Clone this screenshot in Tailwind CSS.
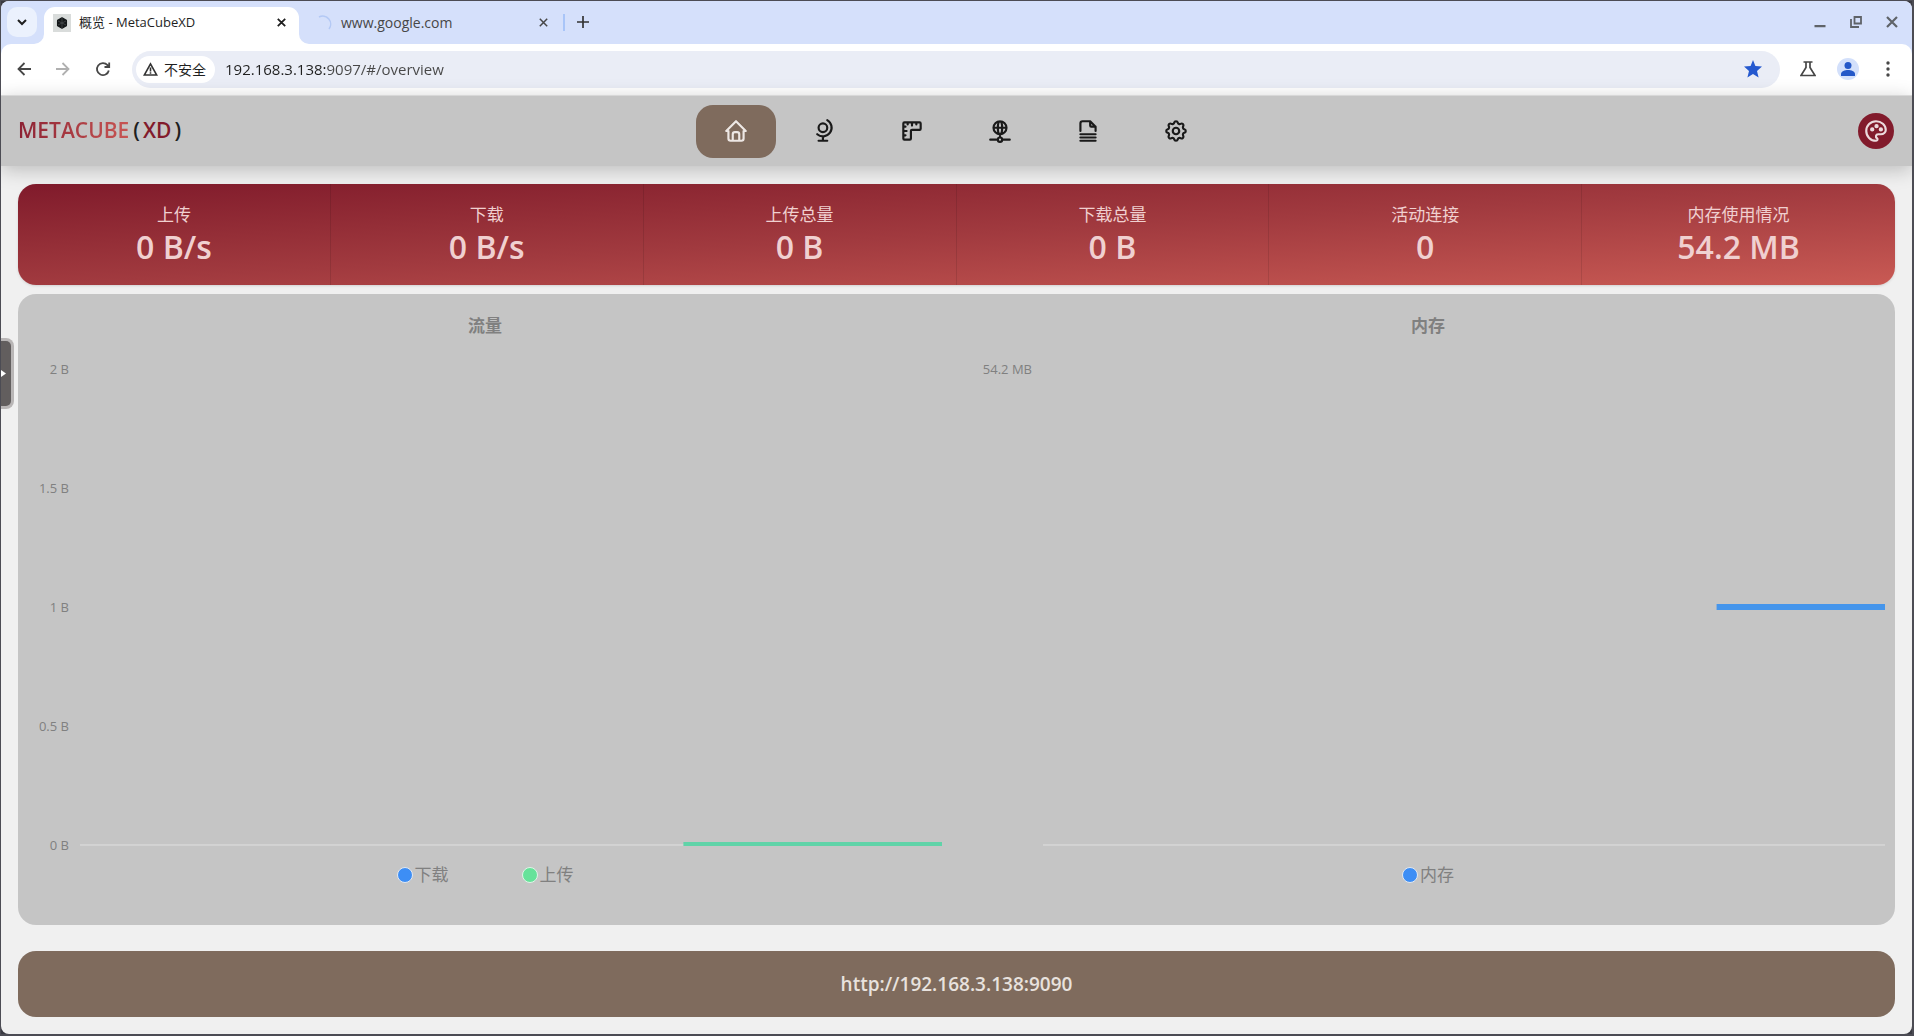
<!DOCTYPE html>
<html lang="zh-CN">
<head>
<meta charset="utf-8">
<title>概览 - MetaCubeXD</title>
<script src="https://cdn.jsdelivr.net/npm/@tailwindcss/browser@4"></script>
</head>
<body class="flex min-h-screen flex-col border-t border-r-2 border-b-2 border-l border-[#4c4c54] bg-[#3a3a42] font-['Open_Sans','Noto_Sans_CJK_SC',sans-serif]">
<div class="relative flex flex-1 flex-col overflow-hidden rounded-lg bg-[#f0f0f0]">

  <!-- Tab strip -->
  <div class="flex h-[43px] items-end bg-[#d5e0fb] pl-[6px] text-[#1f1f1f]">
    <button aria-label="搜索标签页" class="mb-[7px] flex size-[30px] items-center justify-center rounded-[10px] bg-[#ebf1fd]">
      <svg class="size-4" viewBox="0 0 16 16" fill="none" stroke="#1f1f1f" stroke-width="2"><path d="M4 6l4 4 4-4"/></svg>
    </button>
    <div class="relative ml-[7px] flex h-[37px] w-[255px] items-center rounded-t-[11px] bg-white pr-[10px] pb-[6px] pl-[9px] text-[13px]">
      <svg class="absolute -left-[10px] bottom-0 size-[10px]" viewBox="0 0 10 10" fill="#fff"><path d="M10 0v10H0A10 10 0 0 0 10 0z"/></svg>
      <svg class="absolute -right-[10px] bottom-0 size-[10px]" viewBox="0 0 10 10" fill="#fff"><path d="M0 0v10h10A10 10 0 0 1 0 0z"/></svg>
      <svg class="size-[18px]" viewBox="0 0 18 18"><path fill="#d9dcdb" d="M0 0h18v18H0z"/><path fill="#15181a" d="M9 4l4.300 2.500v5L9 14l-4.300-2.500v-5z" stroke="#15181a" stroke-width="1.500" stroke-linejoin="round"/><path d="M9 4v10M5 7l8 4M13 7l-8 4" stroke="#4a4f52" stroke-width=".7"/></svg>
      <span class="ml-2 flex-1 whitespace-nowrap">概览 - MetaCubeXD</span>
      <button aria-label="关闭" class="flex size-4 items-center justify-center"><svg class="size-[9px]" viewBox="0 0 9 9" stroke="#1f1f1f" stroke-width="1.800"><path d="M.8.8l7.400 7.400M8.200.8L.8 8.200"/></svg></button>
    </div>
    <div class="flex h-[37px] w-[262px] items-center pr-[10px] pb-[6px] pl-4 text-[14px] text-[#474747]">
      <svg class="size-[18px]" viewBox="0 0 18 18" fill="none" stroke="#b4c9f5" stroke-width="1.500"><path d="M4 3a8 8 0 0 1 10 12"/></svg>
      <span class="ml-2 flex-1">www.google.com</span>
      <button aria-label="关闭" class="flex size-4 items-center justify-center"><svg class="size-[9px]" viewBox="0 0 9 9" stroke="#474747" stroke-width="1.500"><path d="M.8.8l7.400 7.400M8.200.8L.8 8.200"/></svg></button>
    </div>
    <div class="mb-[13px] ml-[2px] h-[17px] w-[2px] bg-[#a9c5f8]"></div>
    <button aria-label="新标签页" class="mb-[14px] ml-[10px] flex size-4 items-center justify-center"><svg class="size-3" viewBox="0 0 12 12" stroke="#333" stroke-width="1.700"><path d="M6 0v12M0 6h12"/></svg></button>
    <div class="mr-[14px] mb-4 ml-auto flex gap-6">
      <button aria-label="最小化"><svg class="size-3" viewBox="0 0 12 12"><path fill="#5f6368" d="M.5 9h11v2.300H.5z"/></svg></button>
      <button aria-label="还原"><svg class="size-3" viewBox="0 0 12 12" fill="none" stroke="#5f6368" stroke-width="1.800"><path d="M4.500 1h6.500v6.500H4.500zM1 3v8h8"/></svg></button>
      <button aria-label="关闭窗口"><svg class="size-3" viewBox="0 0 12 12" stroke="#5f6368" stroke-width="2.200"><path d="M1 1l10 10M11 1L1 11"/></svg></button>
    </div>
  </div>

  <!-- Toolbar -->
  <div class="flex h-[51px] items-center bg-[#d5e0fb]">
  <div class="flex h-full w-full items-center rounded-t-[10px] bg-white pr-4 pb-px pl-4">
    <button aria-label="后退"><svg class="size-[14px]" viewBox="0 0 14 14" fill="none" stroke="#474747" stroke-width="1.800"><path d="M14 7H1.500M7.500 1L1.500 7l6 6"/></svg></button>
    <button aria-label="前进" class="ml-[25px]"><svg class="size-[14px]" viewBox="0 0 14 14" fill="none" stroke="#b0b0b0" stroke-width="1.800"><path d="M0 7h12.500M6.500 1l6 6-6 6"/></svg></button>
    <button aria-label="重新加载" class="ml-[25px]"><svg class="size-4" viewBox="0 0 16 16" fill="none" stroke="#474747" stroke-width="1.800"><path d="M13.800 9.500A6 6 0 1 1 12.500 4.200L14 6M14.200 1.500V6H9.500"/></svg></button>
    <div class="ml-[21px] flex h-[37px] flex-1 items-center rounded-full bg-[#eaedf6] pr-[18px] pl-1">
      <button class="flex h-[27px] items-center rounded-full bg-white pr-[9px] pl-[7px] text-[14px] text-[#1f1f1f]">
        <svg class="mr-[6px] size-[15px]" viewBox="0 0 15 15" fill="none" stroke="#333" stroke-width="1.600"><path d="M7.500 1.800L1.300 13h12.400zM7.500 5.500v4M7.500 10.300v1.500"/></svg>不安全
      </button>
      <input aria-label="地址" type="text" value="192.168.3.138:9097/#/overview" class="ml-[10px] min-w-0 flex-1 bg-[linear-gradient(90deg,#1f1f1f_102px,#474747_102px)] bg-clip-text text-[15px] text-transparent outline-none">
      <button aria-label="书签"><svg class="size-[18px]" viewBox="0 0 18 18" fill="#2559cf"><path d="M9 0l2.400 6.100 6.600.5-5 4.300L14.600 17.500 9 14l-5.600 3.500L5 10.900 0 6.600l6.600-.5z"/></svg></button>
    </div>
    <button aria-label="实验" class="ml-5"><svg class="size-4" viewBox="0 0 16 16" fill="none" stroke="#474747" stroke-width="1.700"><path d="M3.500 1h9M6 1v5.500L1 14.500h14L10 6.500V1"/></svg></button>
    <button aria-label="个人资料" class="ml-[21px]"><svg class="size-[22px]" viewBox="0 0 22 22"><circle cx="11" cy="11" r="11" fill="#d3e0fb"/><g fill="#2458c8"><circle cx="11" cy="7.500" r="3.500"/><path d="M4 18v-2c0-2.600 4-4 7-4s7 1.400 7 4v2z"/></g></svg></button>
    <button aria-label="菜单" class="ml-[21px]"><svg class="size-4" viewBox="0 0 16 16" fill="#474747"><circle cx="8" cy="2" r="1.700"/><circle cx="8" cy="8" r="1.700"/><circle cx="8" cy="14" r="1.700"/></svg></button>
  </div>
  </div>

  <!-- Page header -->
  <header class="z-10 grid h-[71px] grid-cols-[1fr_auto_1fr] items-center border-t border-[#d8d8d8] bg-[#c5c5c5] pr-[18px] pl-[17px] shadow-[0_4px_18px_rgba(0,0,0,0.22)]">
    <a href="#/" class="flex gap-1 text-[21px] font-semibold text-[#1f1f1f]"><span class="bg-linear-to-r from-[#8c2133] to-[#c85553] bg-clip-text text-transparent">METACUBE</span><span class="flex gap-[3px]">(<span class="text-[#821b2c]">XD</span>)</span></a>
    <nav class="flex gap-2 text-[#1a1a1a]">
      <a href="#/overview" aria-label="概览" class="flex h-[53px] w-20 items-center justify-center rounded-[17px] bg-[#7f6b5d] text-[#ede7e4]"><svg class="size-[26px]" viewBox="0 0 24 24" fill="none" stroke="currentColor" stroke-width="2" stroke-linecap="round" stroke-linejoin="round"><path d="M5 12H3l9-9 9 9h-2M5 12v7a2 2 0 0 0 2 2h10a2 2 0 0 0 2-2v-7M9 21v-6a2 2 0 0 1 2-2h2a2 2 0 0 1 2 2v6"/></svg></a>
      <a href="#/proxies" aria-label="代理" class="flex h-[53px] w-20 items-center justify-center"><svg class="size-[26px]" viewBox="0 0 24 24" fill="none" stroke="currentColor" stroke-width="2" stroke-linecap="round" stroke-linejoin="round"><path d="M7 9a4 4 0 1 0 8 0a4 4 0 0 0-8 0M5.750 15A8.015 8.015 0 1 0 15 2M11 17v4M7 21h8"/></svg></a>
      <a href="#/rules" aria-label="规则" class="flex h-[53px] w-20 items-center justify-center"><svg class="size-[26px]" viewBox="0 0 24 24" fill="none" stroke="currentColor" stroke-width="2" stroke-linecap="round" stroke-linejoin="round"><path d="M5 4h14a1 1 0 0 1 1 1v5a1 1 0 0 1-1 1h-7a1 1 0 0 0-1 1v7a1 1 0 0 1-1 1H5a1 1 0 0 1-1-1V5a1 1 0 0 1 1-1M4 8h2M4 12h3M4 16h2M8 4v2M12 4v3M16 4v2"/></svg></a>
      <a href="#/conns" aria-label="连接" class="flex h-[53px] w-20 items-center justify-center"><svg class="size-[26px]" viewBox="0 0 24 24" fill="none" stroke="currentColor" stroke-width="2" stroke-linecap="round" stroke-linejoin="round"><path d="M6 9a6 6 0 1 0 12 0a6 6 0 0 0-12 0M12 3c1.333.333 2 2.333 2 6s-.667 5.667-2 6M12 3c-1.333.333-2 2.333-2 6s.667 5.667 2 6M6 9h12M3 20h7M14 20h7M10 20a2 2 0 1 0 4 0a2 2 0 0 0-4 0M12 15v3"/></svg></a>
      <a href="#/logs" aria-label="日志" class="flex h-[53px] w-20 items-center justify-center"><svg class="size-[26px]" viewBox="0 0 24 24" fill="none" stroke="currentColor" stroke-width="2" stroke-linecap="round" stroke-linejoin="round"><path d="M14 3v4a1 1 0 0 0 1 1h4M5 12V5a2 2 0 0 1 2-2h7l5 5v4M5 21h14M5 18h14M5 15h14"/></svg></a>
      <a href="#/config" aria-label="配置" class="flex h-[53px] w-20 items-center justify-center"><svg class="size-[26px]" viewBox="0 0 24 24" fill="none" stroke="currentColor" stroke-width="2" stroke-linecap="round" stroke-linejoin="round"><path d="M10.325 4.317c.426-1.756 2.924-1.756 3.350 0a1.724 1.724 0 0 0 2.573 1.066c1.543-.94 3.310.826 2.370 2.370a1.724 1.724 0 0 0 1.065 2.572c1.756.426 1.756 2.924 0 3.350a1.724 1.724 0 0 0-1.066 2.573c.94 1.543-.826 3.310-2.370 2.370a1.724 1.724 0 0 0-2.572 1.065c-.426 1.756-2.924 1.756-3.350 0a1.724 1.724 0 0 0-2.573-1.066c-1.543.94-3.310-.826-2.370-2.370a1.724 1.724 0 0 0-1.065-2.572c-1.756-.426-1.756-2.924 0-3.350a1.724 1.724 0 0 0 1.066-2.573c-.94-1.543.826-3.310 2.370-2.370c1 .608 2.296.07 2.572-1.065"/><circle cx="12" cy="12" r="3"/></svg></a>
    </nav>
    <button aria-label="主题" class="flex size-9 items-center justify-center justify-self-end rounded-full bg-[#821b2c] text-[#ecdadd]"><svg class="size-[26px]" viewBox="0 0 24 24" fill="none" stroke="currentColor" stroke-width="2" stroke-linecap="round" stroke-linejoin="round"><path d="M12 21a9 9 0 0 1 0-18c4.970 0 9 3.582 9 8c0 1.060-.474 2.078-1.318 2.828c-.844.75-1.989 1.172-3.182 1.172H14a2 2 0 0 0-1 3.750A1.300 1.300 0 0 1 12 21"/><circle cx="8.500" cy="10.500" r="1"/><circle cx="12.500" cy="7.500" r="1"/><circle cx="16.500" cy="10.500" r="1"/></svg></button>
  </header>

  <main class="flex flex-1 flex-col px-[17px] pt-[18px] pb-[17px]">
    <!-- Live totals -->
    <section class="grid grid-cols-6 divide-x divide-black/10 rounded-[18px] bg-linear-to-br from-[#801a2b] via-[#a13a3f] to-[#c95a54] text-center text-[#f0d0d0] shadow-sm">
      <div class="flex h-[101px] flex-col justify-center"><div class="text-[17px] leading-6">上传</div><div class="text-[32px] leading-10 font-semibold">0 B/s</div></div>
      <div class="flex h-[101px] flex-col justify-center"><div class="text-[17px] leading-6">下载</div><div class="text-[32px] leading-10 font-semibold">0 B/s</div></div>
      <div class="flex h-[101px] flex-col justify-center"><div class="text-[17px] leading-6">上传总量</div><div class="text-[32px] leading-10 font-semibold">0 B</div></div>
      <div class="flex h-[101px] flex-col justify-center"><div class="text-[17px] leading-6">下载总量</div><div class="text-[32px] leading-10 font-semibold">0 B</div></div>
      <div class="flex h-[101px] flex-col justify-center"><div class="text-[17px] leading-6">活动连接</div><div class="text-[32px] leading-10 font-semibold">0</div></div>
      <div class="flex h-[101px] flex-col justify-center"><div class="text-[17px] leading-6">内存使用情况</div><div class="text-[32px] leading-10 font-semibold">54.2 MB</div></div>
    </section>

    <!-- Charts -->
    <section class="mt-[9px] grid flex-1 grid-cols-2 gap-[9px] rounded-[18px] bg-[#c5c5c5] text-[#808080]">
      <div class="flex flex-col px-[10px] pt-5 pb-[38px]">
        <h2 class="text-center text-[17px] leading-6 font-bold">流量</h2>
        <div class="mt-[31px] flex min-h-40 flex-1 gap-[11px]">
          <div class="-my-2 flex w-[41px] flex-col justify-between text-right text-[13px] leading-4"><span>2 B</span><span>1.5 B</span><span>1 B</span><span>0.5 B</span><span>0 B</span></div>
          <svg class="h-full flex-1 overflow-visible"><line x1="0" x2="100%" y1="100%" y2="100%" stroke="#e0e0e0"/><line x1="70%" x2="100%" y1="100%" y2="100%" transform="translate(0 -1)" stroke="#60d3a8" stroke-width="4"/></svg>
        </div>
        <div class="mt-[18px] flex justify-center gap-[73px] text-[17px] leading-6">
          <span class="flex items-center gap-[2px]"><span class="size-4 rounded-full border border-[#e4e9f0] bg-[#3d8ef5]"></span>下载</span>
          <span class="flex items-center gap-[2px]"><span class="size-4 rounded-full border border-[#e0f5e8] bg-[#66e29a]"></span>上传</span>
        </div>
      </div>
      <div class="flex flex-col px-[10px] pt-5 pb-[38px]">
        <h2 class="text-center text-[17px] leading-6 font-bold">内存</h2>
        <div class="mt-[31px] flex min-h-40 flex-1 gap-[11px]">
          <div class="-my-2 w-[61px] text-right text-[13px] leading-4">54.2 MB</div>
          <svg class="h-full flex-1 overflow-visible"><line x1="0" x2="100%" y1="100%" y2="100%" stroke="#e0e0e0"/><line x1="80%" x2="100%" y1="50%" y2="50%" stroke="#4595eb" stroke-width="6"/></svg>
        </div>
        <div class="mt-[18px] flex justify-center text-[17px] leading-6">
          <span class="flex items-center gap-[2px]"><span class="size-4 rounded-full border border-[#e4e9f0] bg-[#3d8ef5]"></span>内存</span>
        </div>
      </div>
    </section>

    <footer class="mt-[26px] flex h-[66px] items-center justify-center rounded-[18px] bg-[#7f6b5d] text-[19px] font-semibold text-[#e8e2de]">http://192.168.3.138:9090</footer>
  </main>

  <!-- Side panel handle -->
  <button aria-label="展开面板" class="absolute top-[337px] left-0 flex h-[71px] w-[13px] items-center rounded-r-lg border-y-[3px] border-r-[3px] border-[#b9b6b6] bg-[#625e5e]"><svg class="h-[7px] w-[5px]" viewBox="0 0 5 7"><path fill="#fff" d="M0 0l5 3.500L0 7z"/></svg></button>
</div>
</body>
</html>
